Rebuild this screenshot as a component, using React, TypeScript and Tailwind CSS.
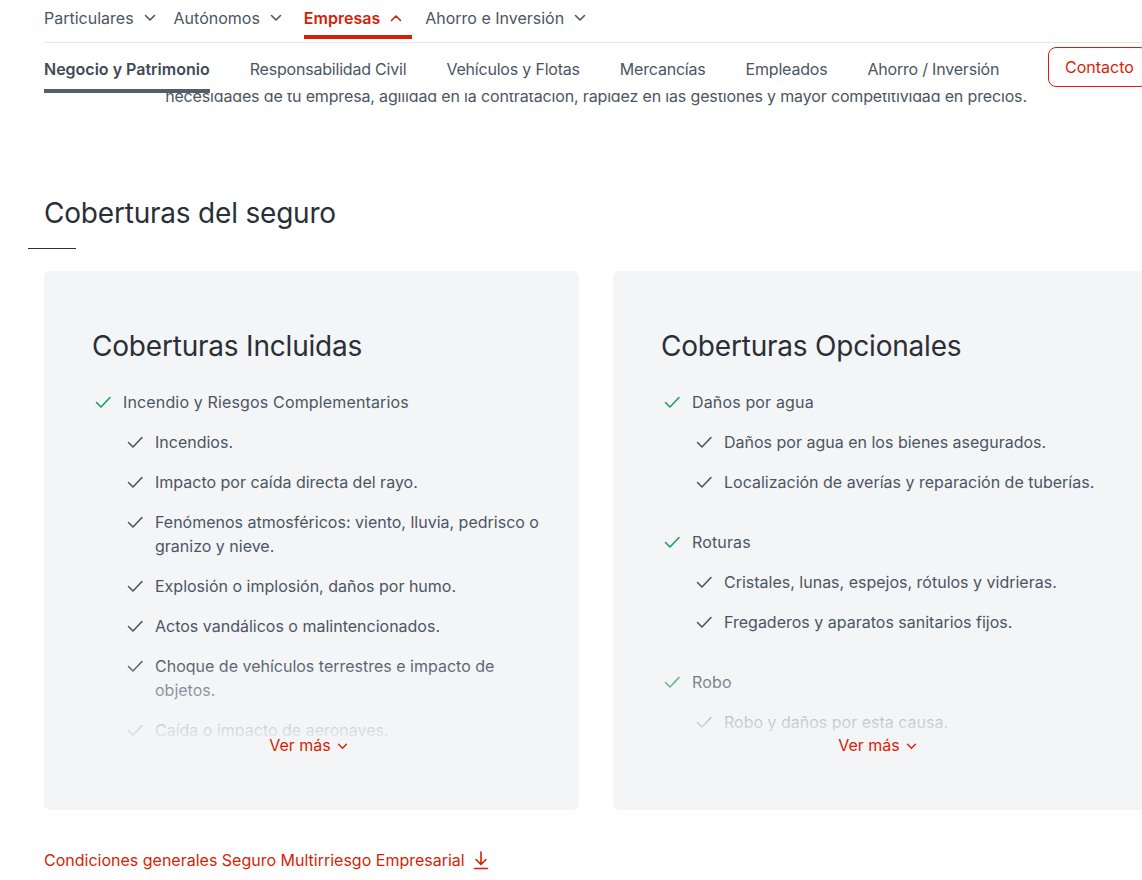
import React from "react";

const F = { fontFamily: "Inter, 'Noto Sans', sans-serif" };

function Chevron({ up = false, className = "" }: { up?: boolean; className?: string }) {
  return (
    <svg width="12" height="8" viewBox="0 0 12 8" className={className} fill="none" stroke="currentColor" strokeWidth="1.6" strokeLinecap="round" strokeLinejoin="round">
      {up ? <path d="M1.5 6.5 6 2l4.5 4.5" /> : <path d="M1.5 1.5 6 6l4.5-4.5" />}
    </svg>
  );
}

function Check({ className = "" }: { className?: string }) {
  return (
    <svg width="18" height="18" viewBox="0 0 18 18" className={className} fill="none" stroke="currentColor" strokeWidth="1.6" strokeLinecap="round" strokeLinejoin="round">
      <path d="M2.5 9.5 7 14 16 4.5" />
    </svg>
  );
}

type Group = { title: string; items: string[] };

const incluidas: Group[] = [
  {
    title: "Incendio y Riesgos Complementarios",
    items: [
      "Incendios.",
      "Impacto por caída directa del rayo.",
      "Fenómenos atmosféricos: viento, lluvia, pedrisco o granizo y nieve.",
      "Explosión o implosión, daños por humo.",
      "Actos vandálicos o malintencionados.",
      "Choque de vehículos terrestres e impacto de objetos.",
      "Caída o impacto de aeronaves.",
      "Ondas sónicas.",
    ],
  },
];

const opcionales: Group[] = [
  { title: "Daños por agua", items: ["Daños por agua en los bienes asegurados.", "Localización de averías y reparación de tuberías."] },
  { title: "Roturas", items: ["Cristales, lunas, espejos, rótulos y vidrieras.", "Fregaderos y aparatos sanitarios fijos."] },
  { title: "Robo", items: ["Robo y daños por esta causa.", "Expoliación."] },
];

function Card({ title, groups }: { title: string; groups: Group[] }) {
  return (
    <div className="w-[535px] shrink-0 rounded-[6px] bg-[#f4f5f7] pl-[48px] pr-[30px] pt-[57px] pb-[57px]">
      <h3 className="text-[28px] leading-[36px] font-normal text-[#2a2f36] tracking-[-0.2px]">{title}</h3>
      <div className="relative mt-[26px] h-[347px] overflow-hidden">
        <div className="flex flex-col gap-[36px]">
          {groups.map((g) => (
            <div key={g.title} className="flex flex-col gap-[16px]">
              <div className="flex items-start gap-[11px] pl-[2px]">
                <Check className="mt-[3px] text-[#1f9d60]" />
                <span className="text-[16px] leading-[24px] text-[#4b5563] tracking-[0.15px]">{g.title}</span>
              </div>
              {g.items.map((it) => (
                <div key={it} className="flex items-start gap-[11px] pl-[34px]">
                  <Check className="mt-[3px] shrink-0 text-[#4b5563]" />
                  <span className="text-[16px] leading-[24px] text-[#4b5563]">{it}</span>
                </div>
              ))}
            </div>
          ))}
        </div>
        <div className="pointer-events-none absolute inset-x-0 bottom-0 h-[80px] bg-gradient-to-b from-[#f4f5f7]/0 to-[#f4f5f7]/90" />
      </div>
      <div className="flex justify-center pr-[24px]">
        <button className="flex items-center gap-[6px] text-[16px] leading-[16px] text-[#d81e05]">
          Ver más <Chevron className="mt-[2px] h-[7px] w-[11px]" />
        </button>
      </div>
    </div>
  );
}

export default function App() {
  return (
    <div className="w-[1142px] h-[880px] overflow-hidden bg-white" style={F}>
      <div className="ml-[44px] w-[1104px]">
        {/* Top nav */}
        <div className="flex h-[43px] items-center gap-[18px] border-b border-[#e5e7eb] pb-[6px] text-[16px] text-[#4b5563]">
          <div className="flex items-center gap-[10px]">Particulares <Chevron /></div>
          <div className="flex items-center gap-[10px]">Autónomos <Chevron /></div>
          <div className="relative ml-[4px] flex h-full items-center gap-[10px] font-semibold text-[#d81e05]">
            Empresas <Chevron up />
            <div className="absolute -bottom-[3px] left-0 right-[-10px] h-[4px] bg-[#d81e05]" />
          </div>
          <div className="ml-[5px] flex items-center gap-[10px]">Ahorro e Inversión <Chevron /></div>
        </div>
        {/* Sub nav */}
        <div className="flex h-[50px] items-start justify-between">
          <div className="flex items-start gap-[40px] text-[16px] text-[#4b5563] tracking-[-0.2px]">
            <div className="flex flex-col">
              <span className="pt-[14px] leading-[24px] font-semibold text-[#3f4a55] tracking-normal">Negocio y Patrimonio</span>
              <span className="mt-[8px] h-[4px] bg-[#525f6b]" />
            </div>
            <span className="pt-[14px] leading-[24px]">Responsabilidad Civil</span>
            <span className="pt-[14px] leading-[24px]">Vehículos y Flotas</span>
            <span className="pt-[14px] leading-[24px]">Mercancías</span>
            <span className="pt-[14px] leading-[24px]">Empleados</span>
            <span className="pt-[14px] leading-[24px]">Ahorro / Inversión</span>
          </div>
          <button className="mt-[4px] h-[40px] w-[100px] rounded-[8px] border border-[#d81e05] text-left pl-[16px] text-[16px] text-[#d81e05]">
            Contacto
          </button>
        </div>
        {/* clipped intro text */}
        <div className="h-[13px] overflow-hidden">
          <p className="-mt-[9px] text-center text-[16px] leading-[24px] text-[#4b5563] tracking-[-0.15px]">
            necesidades de tu empresa, agilidad en la contratación, rapidez en las gestiones y mayor competitividad en precios.
          </p>
        </div>
        {/* Section */}
        <h2 className="mt-[89px] text-[28px] leading-[36px] font-normal text-[#2a2f36] tracking-[-0.2px]">Coberturas del seguro</h2>
        <div className="-ml-[16px] mt-[17px] h-px w-[48px] bg-[#2a2f36]" />
        <div className="mt-[22px] flex gap-[34px]">
          <Card title="Coberturas Incluidas" groups={incluidas} />
          <Card title="Coberturas Opcionales" groups={opcionales} />
        </div>
        <a className="mt-[38px] flex items-center gap-[8px] text-[16px] leading-[24px] text-[#d81e05]">
          Condiciones generales Seguro Multirriesgo Empresarial
          <svg width="16" height="20" viewBox="0 0 16 20" fill="none" stroke="currentColor" strokeWidth="1.6" strokeLinecap="round" strokeLinejoin="round">
            <path d="M8 2v12M3 9.5 8 14.5l5-5M1.5 18.5h13" />
          </svg>
        </a>
      </div>
    </div>
  );
}
